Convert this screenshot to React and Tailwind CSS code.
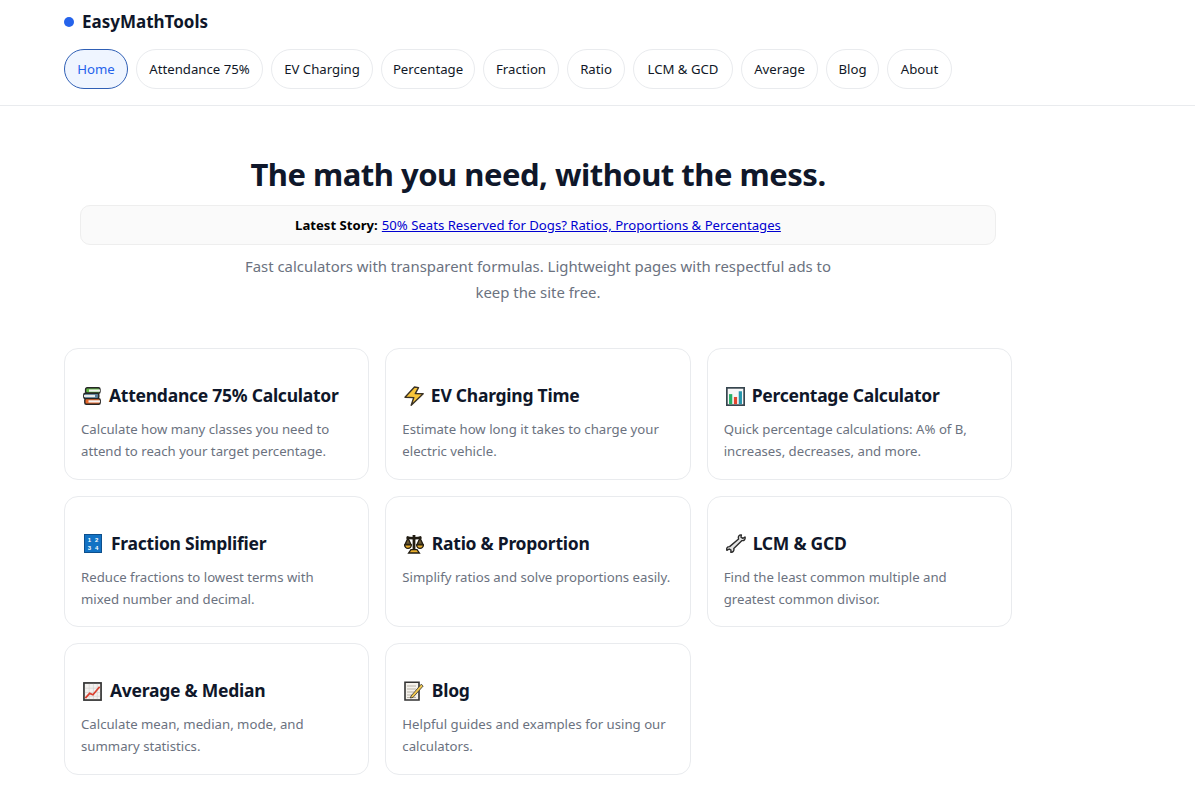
const Books = () => (
  <svg viewBox="0 0 18 18" className="w-[18px] h-[18px]">
    <rect x="2.6" y="0.8" width="14.4" height="5.4" rx="1.5" fill="#62b946" stroke="#262626" strokeWidth="1.4" />
    <rect x="6" y="2.5" width="11" height="2.2" fill="#f2f2f2" />
    <rect x="0.8" y="6.2" width="15" height="5.4" rx="1.5" fill="#5d7f99" stroke="#262626" strokeWidth="1.4" />
    <rect x="1" y="7.9" width="11" height="2.2" fill="#e9e9e9" />
    <rect x="1.8" y="11.6" width="15.4" height="5.6" rx="1.5" fill="#e8692c" stroke="#262626" strokeWidth="1.4" />
    <rect x="5.5" y="13.3" width="11.5" height="2.2" fill="#f4f4f4" />
  </svg>
);
const Bolt = () => (
  <svg viewBox="0 0 20 20" className="w-[20px] h-[20px]">
    <path d="M10.5 1 L14.5 1.6 L11.3 7.6 L19.2 7.8 L7.2 19.2 L9.8 11.6 L1 11.2 Z" fill="#f8c53a" stroke="#3a3226" strokeWidth="1.4" strokeLinejoin="round" />
  </svg>
);
const Bars = () => (
  <svg viewBox="0 0 20 20" className="w-[19px] h-[19px]">
    <rect x="0.9" y="0.9" width="18.2" height="18.2" fill="#f7f7f7" stroke="#37464f" strokeWidth="1.8" />
    <rect x="3.2" y="7.5" width="3.4" height="10.5" fill="#25b066" />
    <rect x="8.3" y="10.5" width="3.4" height="7.5" fill="#e2452f" />
    <rect x="13.4" y="4.5" width="3.4" height="13.5" fill="#2596ad" />
  </svg>
);
const Numbers = () => (
  <svg viewBox="0 0 18 19" className="w-[18px] h-[19px]">
    <rect x="0.5" y="0.5" width="17" height="18" fill="#1272c4" stroke="#0d4f8c" />
    <text x="5.4" y="8.4" fontSize="6" fill="#fff" textAnchor="middle" fontFamily="Liberation Sans">1</text>
    <text x="12.6" y="8.4" fontSize="6" fill="#fff" textAnchor="middle" fontFamily="Liberation Sans">2</text>
    <text x="5.4" y="15.6" fontSize="6" fill="#fff" textAnchor="middle" fontFamily="Liberation Sans">3</text>
    <text x="12.6" y="15.6" fontSize="6" fill="#fff" textAnchor="middle" fontFamily="Liberation Sans">4</text>
  </svg>
);
const Scale = () => (
  <svg viewBox="0 0 20 20" className="w-[20px] h-[20px]">
    <path d="M2.5 3.2 C6 4.6 14 4.6 17.5 3.2" fill="none" stroke="#211c12" strokeWidth="2.6" />
    <path d="M10 1 V16" stroke="#211c12" strokeWidth="2.8" />
    <path d="M4.6 19 H15.4 L13 15.6 H7 Z" fill="#e9ae2c" stroke="#211c12" strokeWidth="1.3" />
    <path d="M4 4 L1 10.5 H7 Z M16 4 L13 10.5 H19 Z" fill="#6b5a34" stroke="#211c12" strokeWidth="1.3" />
    <path d="M0.6 10.8 H7.4 A3.4 3.6 0 0 1 0.6 10.8 Z" fill="#e9ae2c" stroke="#211c12" strokeWidth="1.3" />
    <path d="M12.6 10.8 H19.4 A3.4 3.6 0 0 1 12.6 10.8 Z" fill="#e9ae2c" stroke="#211c12" strokeWidth="1.3" />
  </svg>
);
const Wrench = () => (
  <svg viewBox="0 0 20 19" className="w-[20px] h-[19px]">
    <path d="M15.4 0.9 C13.2 0.6 11.8 2.6 12.6 5 L3.6 12.6 C1.4 12.4 0.2 14.2 0.9 16.4 L3.2 15 L5 16.2 L4.8 18.2 C7 18.6 8.4 16.6 7.8 14.6 L16 6.6 C18.2 7 19.6 5 19 3 L16.8 4.4 L15 3.2 Z" fill="#e3e3e3" stroke="#2c2c2c" strokeWidth="1.4" strokeLinejoin="round" />
  </svg>
);
const Chart = () => (
  <svg viewBox="0 0 20 20" className="w-[19px] h-[19px]">
    <rect x="1" y="1" width="18" height="18" fill="#f3f1ef" stroke="#333" strokeWidth="1.8" />
    <path d="M2 6.5 H18 M2 11 H18 M2 15 H18 M6.5 2 V18 M11 2 V18 M15 2 V18" stroke="#d5d1ce" strokeWidth="0.7" />
    <path d="M2.5 17 L7 12 L10.5 13.5 L17.5 5" fill="none" stroke="#d9402f" strokeWidth="1.8" />
  </svg>
);
const Memo = () => (
  <svg viewBox="0 0 20 20" className="w-[20px] h-[20px]">
    <path d="M1 1.2 H15 V19 H1 Z" fill="#f5f2ec" stroke="#333" strokeWidth="1.6" />
    <path d="M3 5 H12 M3 8 H12 M3 11 H10 M3 14 H8 M3 16.5 H12" stroke="#b8b2a6" strokeWidth="1" />
    <path d="M7 15 L17.2 3.2 L19.2 5 L9 16.4 L6.4 17 Z" fill="#f1c84f" stroke="#333" strokeWidth="0.8" strokeLinejoin="round" />
  </svg>
);

const nav = [
  ["Home", "w-[64px] border-[#2f5fb5] bg-[#eff5ff] text-[#2563eb]"],
  ["Attendance 75%", "w-[127px] border-[#e9ebee] text-[#111827]"],
  ["EV Charging", "w-[102px] border-[#e9ebee] text-[#111827]"],
  ["Percentage", "w-[94px] border-[#e9ebee] text-[#111827]"],
  ["Fraction", "w-[76px] border-[#e9ebee] text-[#111827]"],
  ["Ratio", "w-[58px] border-[#e9ebee] text-[#111827]"],
  ["LCM & GCD", "w-[100px] border-[#e9ebee] text-[#111827]"],
  ["Average", "w-[77px] border-[#e9ebee] text-[#111827]"],
  ["Blog", "w-[53px] border-[#e9ebee] text-[#111827]"],
  ["About", "w-[65px] border-[#e9ebee] text-[#111827]"],
];

const cards = [
  [Books, "w-[28px] pl-[2px]", "Attendance 75% Calculator", "Calculate how many classes you need to attend to reach your target percentage."],
  [Bolt, "w-[28.5px] pl-[2px]", "EV Charging Time", "Estimate how long it takes to charge your electric vehicle."],
  [Bars, "w-[28px] pl-[2px]", "Percentage Calculator", "Quick percentage calculations: A% of B, increases, decreases, and more."],
  [Numbers, "w-[30px] pl-[3px]", "Fraction Simplifier", "Reduce fractions to lowest terms with mixed number and decimal."],
  [Scale, "w-[29.5px] pl-[2px]", "Ratio & Proportion", "Simplify ratios and solve proportions easily."],
  [Wrench, "w-[29px] pl-[2px]", "LCM & GCD", "Find the least common multiple and greatest common divisor."],
  [Chart, "w-[29px] pl-[2px]", "Average & Median", "Calculate mean, median, mode, and summary statistics."],
  [Memo, "w-[29.5px] pl-[2px]", "Blog", "Helpful guides and examples for using our calculators."],
];

export default function App() {
  return (
    <div className="min-h-[795px] bg-white font-['Noto_Sans',sans-serif] overflow-hidden">
      <header className="h-[106px] border-b border-[#e9ebee] pl-[64px] pt-[11px]">
        <div className="flex items-center gap-[8px] h-[22px]">
          <span className="w-[10px] h-[10px] rounded-full bg-[#2563eb]" />
          <span className="text-[17px] leading-[22px] font-bold text-[#0f172a]">EasyMathTools</span>
        </div>
        <nav className="flex gap-[8px] mt-[16px]">
          {nav.map(([label, cls]) => (
            <a key={label} className={`h-[40px] pt-[2px] flex items-center justify-center rounded-full border text-[13.2px] whitespace-nowrap ${cls}`}>
              {label}
            </a>
          ))}
        </nav>
      </header>
      <main className="w-[948px] ml-[64px]">
        <section className="pt-[48px] text-center">
          <h1 className="text-[31px] leading-[40px] font-bold tracking-[-0.5px] text-[#0f172a]">The math you need, without the mess.</h1>
          <div className="mx-[16px] mt-[11px] h-[40px] pt-[2px] flex items-center justify-center rounded-[10px] border border-[#eeeeee] bg-[#fafafa] text-[13.15px] text-black">
            <strong className="font-bold">Latest Story:</strong>
            <a className="ml-[4px] text-[#0000d0] underline">50% Seats Reserved for Dogs? Ratios, Proportions &amp; Percentages</a>
          </div>
          <p className="mx-auto mt-[8px] w-[600px] text-[14.9px] leading-[26px] text-[#6b7280]">
            Fast calculators with transparent formulas. Lightweight pages with respectful ads to keep the site free.
          </p>
        </section>
        <section className="grid grid-cols-3 gap-x-[16px] gap-y-[16px] mt-[43px]">
          {cards.map(([Icon, w, title, desc]) => (
            <a key={title} className="h-[131.5px] rounded-[14px] border border-[#e9ebee] bg-white px-[16px] pt-[34px]">
              <h3 className="flex items-center h-[24px] text-[17.5px] leading-[24px] font-bold tracking-[-0.25px] text-[#0f172a] whitespace-nowrap">
                <span className={`flex shrink-0 mt-[2px] ${w}`}><Icon /></span>
                {title}
              </h3>
              <p className="mt-[11px] text-[13.2px] leading-[22.4px] text-[#6b7280]">{desc}</p>
            </a>
          ))}
        </section>
      </main>
    </div>
  );
}
